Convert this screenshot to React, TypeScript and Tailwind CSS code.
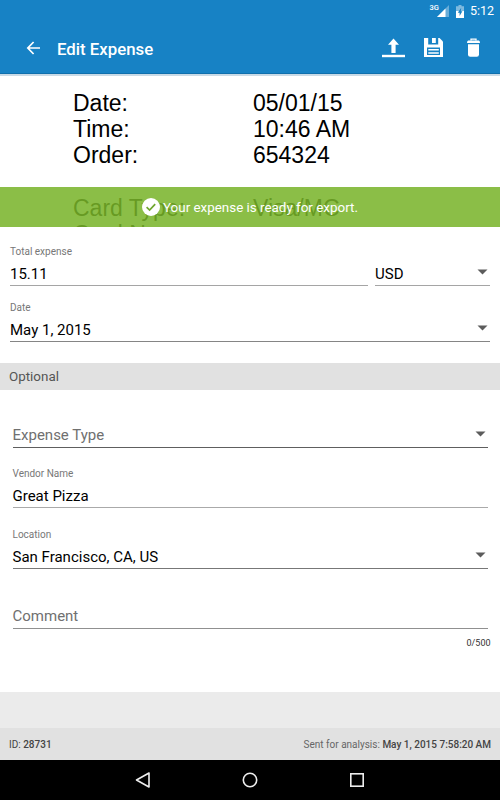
import React from 'react';

const receiptRows = [
  { label: 'Date:', value: '05/01/15' },
  { label: 'Time:', value: '10:46 AM' },
  { label: 'Order:', value: '654324' },
  { label: '', value: '' },
  { label: 'Card Type:', value: 'Visa/MC' },
  { label: 'Card Num:', value: '' },
];

function StatusBar() {
  return (
    <div className="flex h-[22px] items-center justify-end pr-[6px] text-white">
      <span className="mb-[7px] text-[7.5px] leading-none font-medium">3G</span>
      <svg width="12" height="12" viewBox="0 0 12 12" className="-ml-[2px]">
        <path d="M12 0V12H0Z" fill="#fff" fillOpacity="0.35" />
        <path d="M8.5 3.5V12H0Z" fill="#fff" />
      </svg>
      <svg width="8" height="13" viewBox="0 0 8 13" className="ml-[7px]">
        <path d="M2.5 0H5.5V1.3H8V6H0V1.3H2.5Z" fill="#fff" fillOpacity="0.45" />
        <path d="M0 6H8V13H0Z" fill="#fff" />
        <path d="M5.2 2.8L1.8 7.7H3.6V11L6.4 6.3H4.8Z" fill="#1782c5" />
      </svg>
      <span className="ml-[6px] pt-px text-[12.5px] leading-none">5:12</span>
    </div>
  );
}

function Toolbar() {
  return (
    <div className="flex h-[52px] items-center border-b border-[#0f6fac] pl-[26px] text-white">
      <button aria-label="Back">
        <svg width="15" height="14" viewBox="0 0 15 14" fill="none" stroke="currentColor" strokeWidth="1.7">
          <path d="M14 7H2M7.6 1L1.8 7L7.6 13" />
        </svg>
      </button>
      <h1 className="ml-4 flex-1 pt-[2px] text-[16.8px] leading-6 font-medium">Edit Expense</h1>
      <button aria-label="Export">
        <svg width="23" height="20" viewBox="0 0 23 20" fill="currentColor">
          <path d="M11.5 0.5L17 6.8H13.6V15H9.4V6.8H6Z" />
          <path d="M0 16.8H23V19.2H0Z" />
        </svg>
      </button>
      <button aria-label="Save" className="ml-[19px]">
        <svg width="19" height="19" viewBox="0 0 19 19">
          <path d="M0 0H15.5L19 3.5V19H0Z" fill="#fff" />
          <path d="M4.2 0H14.2V6.5H4.2Z" fill="#1782c5" />
          <path d="M8 0H11.8V5H8Z" fill="#fff" />
          <path d="M3 9.5H16V17H3Z" fill="#1782c5" />
          <path d="M4.3 11H14.8V12.6H4.3ZM4.3 14.2H14.8V15.8H4.3Z" fill="#fff" />
        </svg>
      </button>
      <button aria-label="Delete" className="mr-5 ml-6">
        <svg width="13" height="19" viewBox="0 0 13 19">
          <path d="M4 2.6V1.2H9V2.6" fill="none" stroke="#fff" strokeWidth="1.3" />
          <path d="M1.2 2.4H11.8Q13 2.8 13 5H0Q0 2.8 1.2 2.4Z" fill="#fff" />
          <path d="M1 6.2H12V16.5Q12 18.8 9.8 18.8H3.2Q1 18.8 1 16.5Z" fill="#fff" />
        </svg>
      </button>
    </div>
  );
}

function Receipt() {
  return (
    <div className="relative h-[153px] overflow-hidden bg-white pt-4 pl-[73px] font-['Liberation_Sans',sans-serif] text-[23px] leading-[26.2px] text-black">
      <div className="absolute inset-x-0 top-0 h-[2px] bg-[#c9dae6]" />
      {receiptRows.map((row, i) => (
        <div key={i} className="flex h-[26.2px]">
          <span className="w-[180px]">{row.label}</span>
          <span>{row.value}</span>
        </div>
      ))}
      <div className="absolute inset-x-0 bottom-0 flex h-10 items-center bg-[#78b329]/86 pl-[142px] font-[Roboto,sans-serif] text-[13.4px] text-white">
        <svg width="18" height="18" viewBox="0 0 18 18">
          <circle cx="9" cy="9" r="9" fill="#fff" />
          <path d="M4.6 9.2L7.6 12L13.2 6.2" fill="none" stroke="#6fa62f" strokeWidth="1.7" />
        </svg>
        <span className="ml-[3px] pt-[2px]">Your expense is ready for export.</span>
      </div>
    </div>
  );
}

type FieldProps = {
  label?: string;
  value?: string;
  placeholder?: string;
  select?: boolean;
  className?: string;
};

function Field({ label, value, placeholder, select, className = '' }: FieldProps) {
  return (
    <div className={`flex h-[42px] flex-col justify-between border-b pt-px ${className}`}>
      <span className="h-[14px] text-[10px] leading-[14px] text-[#777]">{label}</span>
      <div className="flex h-[21px] items-center justify-between pr-[2px] text-[15px] leading-[21px] text-black">
        {value ? <span>{value}</span> : <span className="pb-[2px] text-[#707070]">{placeholder}</span>}
        {select && (
          <svg width="11" height="6" viewBox="0 0 11 6" className="mb-[5px]">
            <path d="M0.5 0.5H10.5L5.5 5.5Z" fill="#5c5c5c" />
          </svg>
        )}
      </div>
    </div>
  );
}

function NavBar() {
  return (
    <nav className="flex h-10 items-center justify-center gap-[91px] bg-black">
      <svg width="16" height="16" viewBox="0 0 16 16" fill="none" stroke="#eee" strokeWidth="1.6" strokeLinejoin="round">
        <path d="M1.5 8L14 1V15Z" />
      </svg>
      <svg width="16" height="16" viewBox="0 0 16 16" fill="none" stroke="#eee" strokeWidth="1.6">
        <circle cx="8" cy="8" r="6.7" />
      </svg>
      <svg width="16" height="16" viewBox="0 0 16 16" fill="none" stroke="#eee" strokeWidth="1.6">
        <rect x="1.8" y="1.8" width="12.4" height="12.4" />
      </svg>
    </nav>
  );
}

export default function App() {
  return (
    <div className="flex h-[800px] w-[500px] flex-col overflow-hidden bg-white font-[Roboto,sans-serif]">
      <header className="bg-[#1782c5]">
        <StatusBar />
        <Toolbar />
      </header>
      <Receipt />

      <section className="h-[136px] px-[10px] pt-[17px]">
        <div className="flex gap-[7px]">
          <Field label="Total expense" value="15.11" className="w-[358px] border-[#a5a5a5]" />
          <Field value="USD" select className="flex-1 border-[#a5a5a5]" />
        </div>
        <Field label="Date" value="May 1, 2015" select className="mt-[14px] border-[#858585]" />
      </section>

      <h2 className="h-[27px] bg-[#e1e1e1] pl-[9px] text-[13.4px] leading-[28px] text-[#555]">Optional</h2>

      <section className="h-[302px] px-[12.5px] pt-4">
        <Field placeholder="Expense Type" select className="border-[#5e5e5e]" />
        <Field label="Vendor Name" value="Great Pizza" className="mt-[18px] border-[#aaa]" />
        <Field label="Location" value="San Francisco, CA, US" select className="mt-[19px] border-[#777]" />
        <Field placeholder="Comment" className="mt-[18px] border-[#909090]" />
        <div className="-mr-[3px] pt-[7px] text-right text-[9px] leading-[14px] text-[#333]">0/500</div>
      </section>

      <div className="h-9 bg-[#ebebeb]" />
      <footer className="flex h-8 items-center justify-between bg-[#e1e1e1] px-[9px] text-[10px] text-[#444]">
        <span>
          ID: <span className="font-medium">28731</span>
        </span>
        <span className="text-[#666]">
          Sent for analysis: <span className="font-medium text-[#444]">May 1, 2015 7:58:20 AM</span>
        </span>
      </footer>
      <NavBar />
    </div>
  );
}
